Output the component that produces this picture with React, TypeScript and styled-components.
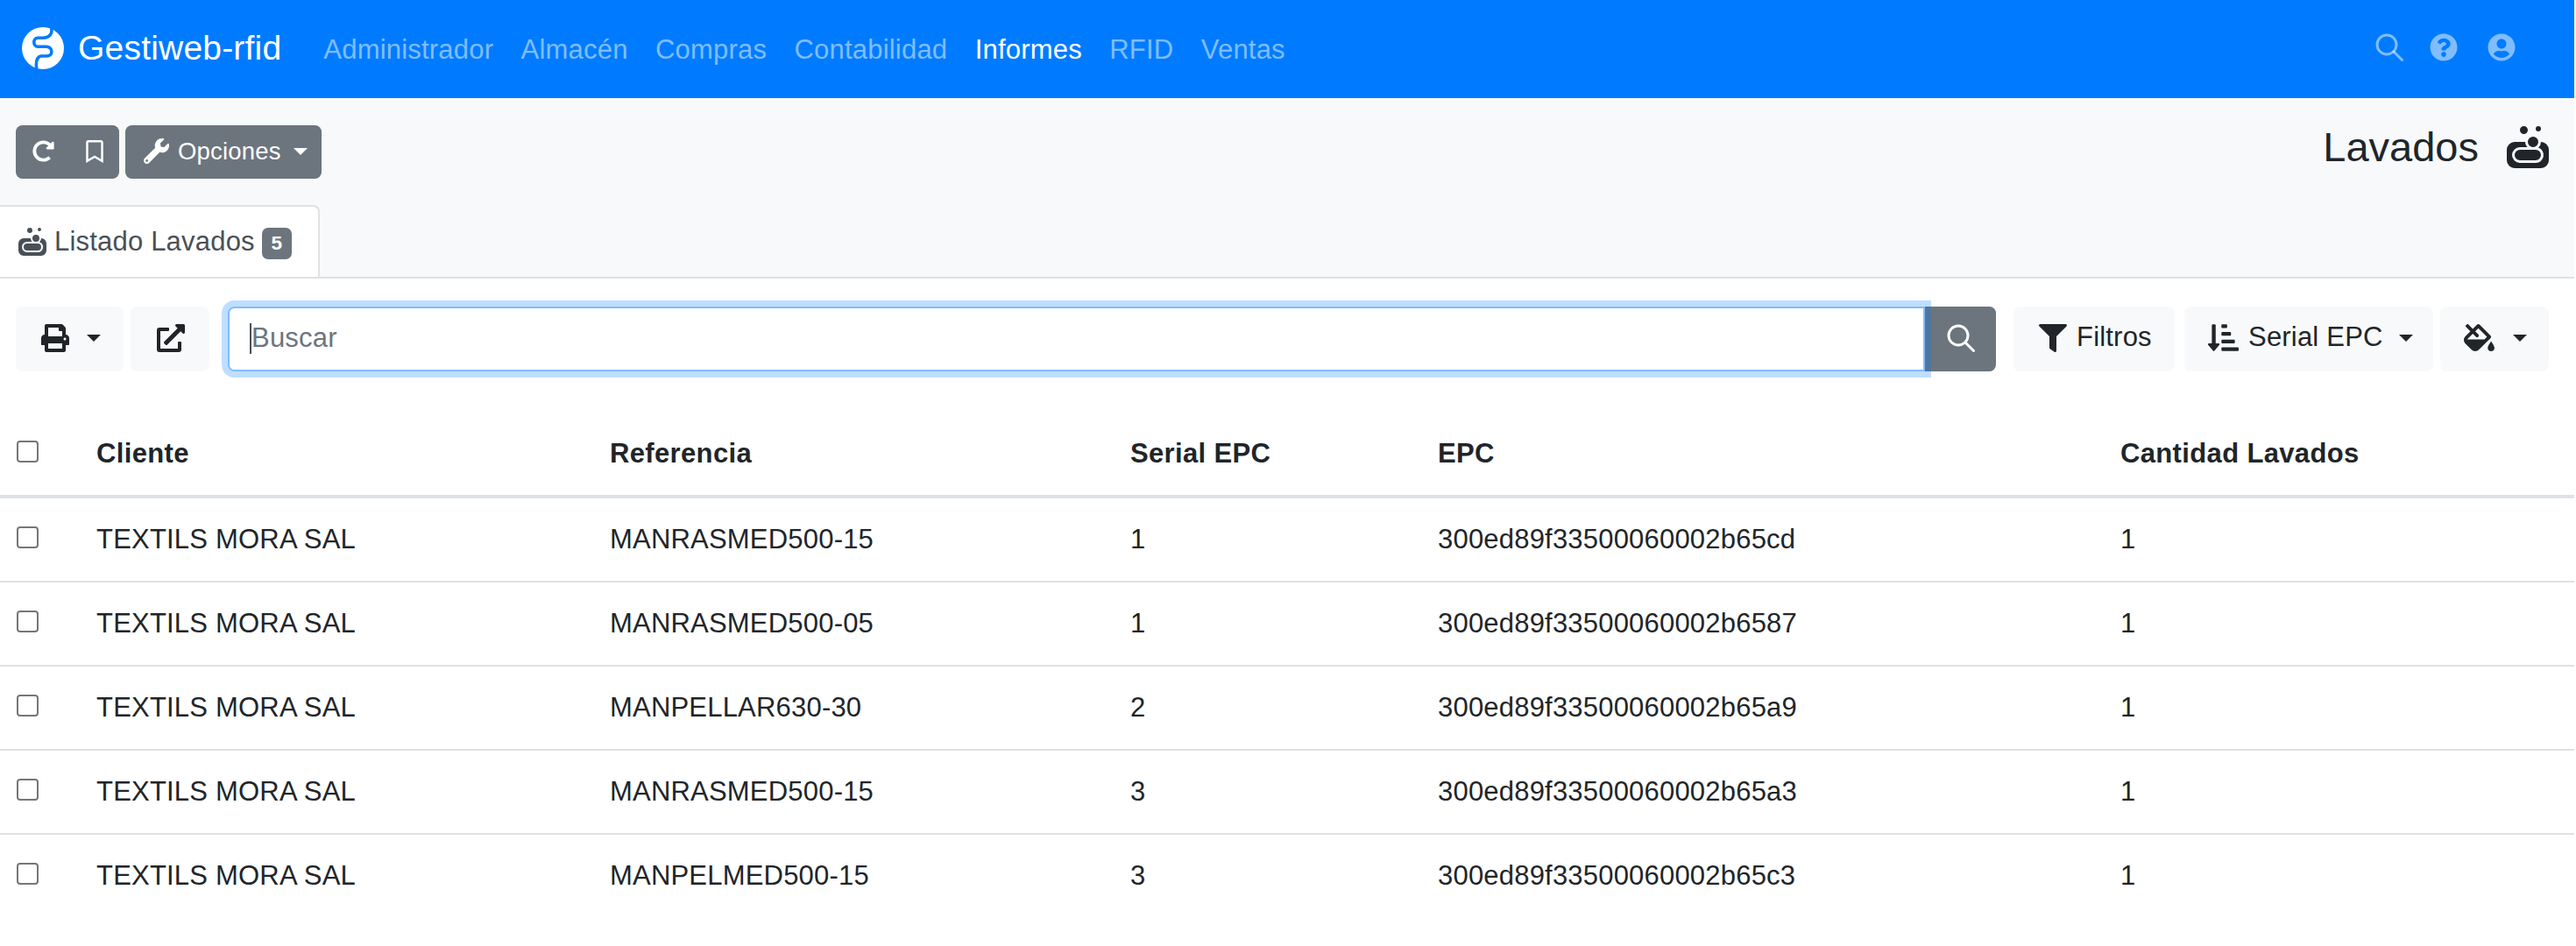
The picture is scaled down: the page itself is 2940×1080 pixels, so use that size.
import styled, { createGlobalStyle } from 'styled-components'
import {
  FaSoap, FaRedoAlt, FaRegBookmark, FaWrench, FaPrint, FaExternalLinkAlt, FaFilter,
  FaSortAmountDownAlt, FaFillDrip, FaQuestionCircle, FaUserCircle,
} from 'react-icons/fa'

const Global = createGlobalStyle`
  html, body { margin: 0; padding: 0; background: #fff; }
  body {
    font-family: "Liberation Sans", Arial, sans-serif;
    font-size: 31px;
    letter-spacing: .2px;
    line-height: 1.5;
    color: #212529;
  }
`

const Page = styled.div`
  width: 2938px;
  min-height: 1080px;
  background: #fff;
`

const Navbar = styled.nav`
  height: 112px;
  background: #007bff;
  display: flex;
  align-items: center;
  padding: 0 67px 0 25px;
`

const Brand = styled.a`
  display: flex;
  align-items: center;
  gap: 16px;
  color: #fff;
  font-size: 39px;
  margin-right: 48px;
  position: relative;
  top: -1px;
`

const NavLinks = styled.div`
  display: flex;
  gap: 31.4px;
  flex: 1;
  position: relative;
  top: 1px;
`

const NavLink = styled.a<{ $active?: boolean }>`
  color: ${p => (p.$active ? '#fff' : 'rgba(255,255,255,.5)')};
`

const NavIcons = styled.div`
  display: flex;
  gap: 30px;
  color: rgba(255, 255, 255, 0.5);
  position: relative;
  top: -2px;
  & > :last-child {
    margin-left: 4px;
  }
`

const TopSection = styled.header`
  background: #f8f9fa;
  height: 206px;
  border-bottom: 2px solid #dee2e6;
  box-sizing: border-box;
  display: flex;
  flex-direction: column;
`

const ActionRow = styled.div`
  display: flex;
  justify-content: space-between;
  align-items: flex-start;
  padding: 31px 29px 0 18px;
  height: 124px;
  box-sizing: border-box;
`

const ActionButtons = styled.div`
  display: flex;
  gap: 7px;
`

const DarkButton = styled.button`
  height: 61px;
  display: inline-flex;
  align-items: center;
  border: 0;
  border-radius: 7.5px;
  background: #6c757d;
  color: #fff;
  font: inherit;
  font-size: 27.5px;
  letter-spacing: .2px;
  padding: 0 0 2px;
`

const RefreshGroup = styled(DarkButton)`
  width: 118px;
  padding-left: 19px;
  gap: 33px;
`

const OptionsButton = styled(DarkButton)`
  width: 224px;
  padding-left: 21px;
  gap: 10px;
`

const Caret = styled.i<{ $gap?: number }>`
  display: inline-block;
  width: 0;
  height: 0;
  border-top: 8px solid currentColor;
  border-left: 8px solid transparent;
  border-right: 8px solid transparent;
  margin-left: ${p => p.$gap ?? 15}px;
`

const PageTitle = styled.h1`
  margin: 0;
  font-size: 47px;
  font-weight: 400;
  letter-spacing: 0;
  line-height: 48px;
  display: flex;
  align-items: center;
  gap: 32px;
  padding-top: 1px;
`

const Tabs = styled.div`
  display: flex;
  height: 82px;
`

const Tab = styled.a`
  width: 365px;
  height: 82px;
  box-sizing: border-box;
  background: #fff;
  border: 2px solid #dee2e6;
  border-bottom: 0;
  border-left: 0;
  border-top-right-radius: 7.5px;
  color: #495057;
  display: flex;
  align-items: center;
  padding: 0 0 0 21px;
  gap: 9px;
`

const Badge = styled.span`
  width: 34px;
  height: 36px;
  margin-left: -1px;
  margin-top: 3px;
  border-radius: 7px;
  background: #6c757d;
  color: #fff;
  font-size: 22.5px;
  font-weight: 700;
  display: flex;
  align-items: center;
  justify-content: center;
`

const Toolbar = styled.div`
  display: flex;
  align-items: stretch;
  height: 74px;
  padding: 32px 29px 0 18px;
`

const LightButton = styled.button<{ $left?: number; $width: number; $pad: number }>`
  width: ${p => p.$width}px;
  margin-left: ${p => p.$left ?? 0}px;
  padding: 0 0 3px ${p => p.$pad}px;
  border: 0;
  border-radius: 7.5px;
  background: #f8f9fa;
  color: #212529;
  font: inherit;
  letter-spacing: .2px;
  display: inline-flex;
  align-items: center;
  gap: 11px;
  flex: none;
`

const SearchGroup = styled.div`
  flex: 1;
  display: flex;
  margin: 0 0 0 21px;
`

const InputWrap = styled.div`
  flex: 1;
  position: relative;
  z-index: 2;
  &::before {
    content: '';
    position: absolute;
    left: 25px;
    top: 19px;
    width: 2px;
    height: 35px;
    background: #495057;
  }
`

const SearchInput = styled.input`
  width: 100%;
  height: 100%;
  box-sizing: border-box;
  border: 2px solid #80bdff;
  border-radius: 7.5px 0 0 7.5px;
  box-shadow: 0 0 0 7px rgba(0, 123, 255, 0.25);
  outline: 0;
  padding: 0 24px 3px 25px;
  font: inherit;
  letter-spacing: .2px;
  color: #495057;
  &::placeholder {
    color: #6c757d;
    opacity: 1;
  }
`

const SearchButton = styled.button`
  width: 81px;
  border: 0;
  border-radius: 0 7.5px 7.5px 0;
  background: #6c757d;
  color: #fff;
  display: flex;
  align-items: center;
  justify-content: center;
  padding: 0 0 3px;
`

const Table = styled.table`
  width: 100%;
  margin-top: 47px;
  table-layout: fixed;
  border-collapse: collapse;
`

const HeadCell = styled.th`
  height: 94px;
  padding: 0 22px;
  text-align: left;
  font-weight: 700;
  letter-spacing: .35px;
  border-bottom: 4px solid #dee2e6;
`

const Row = styled.tr`
  & + & td {
    border-top: 2px solid #dee2e6;
  }
`

const Cell = styled.td`
  height: 94px;
  padding: 0 22px;
`

const CheckCell = styled(Cell)`
  padding: 0 0 0 19px;
`

const CheckHead = styled(HeadCell)`
  padding: 0 0 0 19px;
`

const Check = styled.span`
  display: block;
  width: 25px;
  height: 25px;
  box-sizing: border-box;
  border: 2px solid #767676;
  border-radius: 4px;
  background: #fff;
  position: relative;
  top: -3px;
`

function SearchGlyph() {
  return (
    <svg width="32" height="32" viewBox="0 0 32 32" fill="none" stroke="currentColor" strokeWidth="3" strokeLinecap="round">
      <circle cx="13" cy="13" r="11" />
      <path d="M21 21l9.5 9.5" />
    </svg>
  )
}

function Logo() {
  return (
    <svg width="48" height="48" viewBox="0 0 48 48">
      <circle cx="24" cy="24" r="24" fill="#fff" />
      <path
        d="M33.7 0C35 7.3 32.3 11.3 25 12.3L18.3 12.3C12.3 12.3 12.3 22.3 18.3 22.3L28.3 22.3C35.7 23 35.7 33 28.3 33L21.7 33C16.7 34 15.7 39 16.7 47.5"
        fill="none"
        stroke="#007bff"
        strokeWidth="3.6"
      />
    </svg>
  )
}

const links = ['Administrador', 'Almacén', 'Compras', 'Contabilidad', 'Informes', 'RFID', 'Ventas']

const rows = [
  ['TEXTILS MORA SAL', 'MANRASMED500-15', '1', '300ed89f33500060002b65cd', '1'],
  ['TEXTILS MORA SAL', 'MANRASMED500-05', '1', '300ed89f33500060002b6587', '1'],
  ['TEXTILS MORA SAL', 'MANPELLAR630-30', '2', '300ed89f33500060002b65a9', '1'],
  ['TEXTILS MORA SAL', 'MANRASMED500-15', '3', '300ed89f33500060002b65a3', '1'],
  ['TEXTILS MORA SAL', 'MANPELMED500-15', '3', '300ed89f33500060002b65c3', '1'],
]

export default function App() {
  return (
    <Page>
      <Global />
      <Navbar>
        <Brand>
          <Logo />
          Gestiweb-rfid
        </Brand>
        <NavLinks>
          {links.map(l => (
            <NavLink key={l} $active={l === 'Informes'}>{l}</NavLink>
          ))}
        </NavLinks>
        <NavIcons>
          <SearchGlyph />
          <FaQuestionCircle size={32} />
          <FaUserCircle size={32} />
        </NavIcons>
      </Navbar>

      <TopSection>
        <ActionRow>
          <ActionButtons>
            <RefreshGroup>
              <FaRedoAlt size={25} />
              <FaRegBookmark size={26} />
            </RefreshGroup>
            <OptionsButton>
              <FaWrench size={29} />
              Opciones
              <Caret $gap={4} />
            </OptionsButton>
          </ActionButtons>
          <PageTitle>
            Lavados
            <FaSoap size={48} />
          </PageTitle>
        </ActionRow>
        <Tabs>
          <Tab>
            <FaSoap size={32} />
            Listado Lavados
            <Badge>5</Badge>
          </Tab>
        </Tabs>
      </TopSection>

      <Toolbar>
        <LightButton $width={123} $pad={29}>
          <FaPrint size={32} />
          <Caret $gap={9} />
        </LightButton>
        <LightButton $left={8} $width={90} $pad={30}>
          <FaExternalLinkAlt size={32} />
        </LightButton>
        <SearchGroup>
          <InputWrap>
            <SearchInput placeholder="Buscar" readOnly />
          </InputWrap>
          <SearchButton>
            <SearchGlyph />
          </SearchButton>
        </SearchGroup>
        <LightButton $left={20} $width={184} $pad={29}>
          <FaFilter size={32} />
          Filtros
        </LightButton>
        <LightButton $left={11} $width={284} $pad={27}>
          <FaSortAmountDownAlt size={35} />
          Serial EPC
          <Caret $gap={7} />
        </LightButton>
        <LightButton $left={8} $width={124} $pad={27}>
          <FaFillDrip size={35} />
          <Caret $gap={10} />
        </LightButton>
      </Toolbar>

      <Table>
        <colgroup>
          <col style={{ width: 88 }} />
          <col style={{ width: 586 }} />
          <col style={{ width: 594 }} />
          <col style={{ width: 351 }} />
          <col style={{ width: 779 }} />
          <col />
        </colgroup>
        <thead>
          <tr>
            <CheckHead><Check /></CheckHead>
            <HeadCell>Cliente</HeadCell>
            <HeadCell>Referencia</HeadCell>
            <HeadCell>Serial EPC</HeadCell>
            <HeadCell>EPC</HeadCell>
            <HeadCell>Cantidad Lavados</HeadCell>
          </tr>
        </thead>
        <tbody>
          {rows.map((r, i) => (
            <Row key={i}>
              <CheckCell><Check /></CheckCell>
              {r.map((c, j) => (
                <Cell key={j}>{c}</Cell>
              ))}
            </Row>
          ))}
        </tbody>
      </Table>
    </Page>
  )
}
